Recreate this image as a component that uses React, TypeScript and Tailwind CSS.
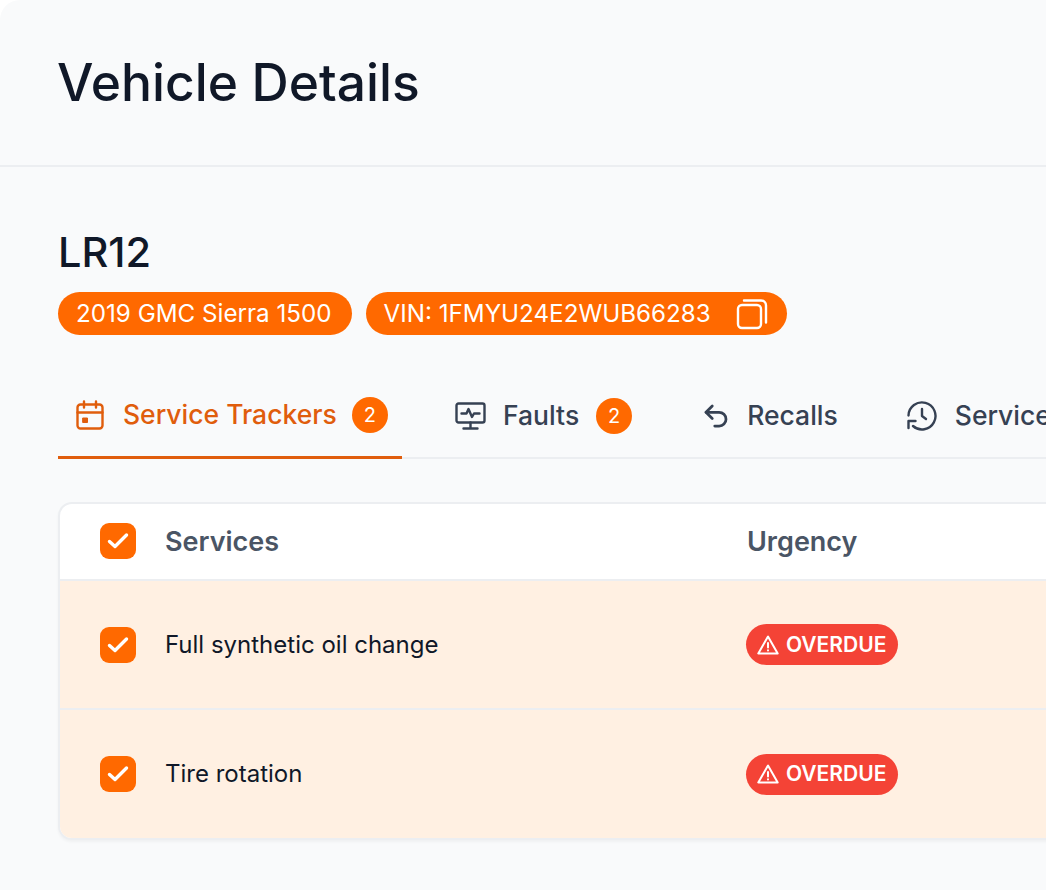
import { Undo2 } from 'lucide-react';

const CalendarIcon = () => (
  <svg width="30" height="30" viewBox="0 0 30 30" fill="none" stroke="currentColor" strokeWidth="2.4" strokeLinecap="round" strokeLinejoin="round">
    <rect x="1.5" y="4.5" width="25" height="24" rx="3" />
    <path d="M8 1.5v6M20 1.5v6M1.5 12.5h25" />
    <rect x="7" y="18" width="4.5" height="4.5" fill="currentColor" strokeWidth="1" />
  </svg>
);

const MonitorIcon = () => (
  <svg width="31" height="30" viewBox="0 0 31 30" fill="none" stroke="currentColor" strokeWidth="2.4" strokeLinecap="round" strokeLinejoin="round">
    <rect x="1.5" y="2.5" width="28" height="19" rx="2" />
    <path d="M15.5 21.5v6M8.5 27.5h14M6.5 12.5h5l2-4.5 3.5 8 2-3.5h5.5" />
  </svg>
);

const HistoryIcon = () => (
  <svg width="32" height="32" viewBox="0 0 32 32" fill="none" stroke="currentColor" strokeWidth="2.4" strokeLinecap="round" strokeLinejoin="round">
    <path d="M2.5 15.5a13.5 13.5 0 1 1 4.5 10.5" />
    <path d="M2.5 28v-7h7" />
    <path d="M16 9v7l4 3" />
  </svg>
);

const CopyIcon = () => (
  <svg width="32" height="32" viewBox="0 0 32 32" fill="none" stroke="currentColor" strokeWidth="2.4" strokeLinecap="round" strokeLinejoin="round">
    <rect x="2" y="7" width="23" height="23" rx="4" />
    <path d="M8 2.5h17a5 5 0 0 1 5 5v17" />
  </svg>
);

const WarningIcon = () => (
  <svg width="22" height="20" viewBox="0 0 22 20" fill="none" stroke="currentColor" strokeWidth="2" strokeLinecap="round" strokeLinejoin="round">
    <path d="M11 1.5 1.3 18.5h19.4z" />
    <path d="M11 8v4.5M11 15.3v.2" />
  </svg>
);

const Checkbox = () => (
  <span className="flex h-9 w-9 shrink-0 items-center justify-center rounded-[9px] bg-[#ff6900]">
    <svg width="22" height="18" viewBox="0 0 22 18" fill="none" stroke="white" strokeWidth="3.4" strokeLinecap="round" strokeLinejoin="round">
      <path d="M2.5 9.5 8 14.5 19.5 3" />
    </svg>
  </span>
);

const Count = ({ n }: { n: number }) => (
  <span className="flex h-9 w-9 items-center justify-center rounded-full bg-[#ff6900] text-[20px] font-normal text-white">{n}</span>
);

const Overdue = () => (
  <span className="-ml-px inline-flex h-[41px] w-[152px] items-center gap-[7px] rounded-full bg-[#f44336] pl-[11px] text-[21px] font-semibold text-white">
    <WarningIcon />
    OVERDUE
  </span>
);

export default function App() {
  return (
    <div className="h-[890px] w-[1046px] overflow-hidden bg-white font-['Inter','Noto_Sans',sans-serif]">
      <div className="h-full w-full rounded-tl-[20px] bg-[#f9fafb]">
        <div className="flex h-[167px] items-center border-b-2 border-[#eceef1] pl-[57px]">
          <h1 className="text-[51.5px] font-medium leading-none text-[#101828]">Vehicle Details</h1>
        </div>

        <div className="pl-[58px] pt-[62px]">
          <h2 className="text-[41.5px] font-medium leading-[46px] text-[#101828]">LR12</h2>

          <div className="mt-[17px] flex gap-[14px] text-[24.2px] text-white">
            <span className="flex h-[43px] items-center rounded-full bg-[#ff6900] pl-[18px] pr-[20px] pt-px">2019 GMC Sierra 1500</span>
            <span className="flex h-[43px] items-center gap-[25px] rounded-full bg-[#ff6900] pl-[18px] pr-[19px] pt-px">
              VIN: 1FMYU24E2WUB66283
              <CopyIcon />
            </span>
          </div>

          <div className="mt-[37px] flex h-[87px] w-[1100px] border-b-2 border-[#eceef1] pt-[2px] text-[26.5px] font-medium text-[#364153]">
            <div className="-mb-[2px] flex w-[344px] items-center border-b-[3px] border-[#e05d0c] pl-[18px] text-[#e05d0c]">
              <CalendarIcon />
              <span className="ml-[17px]">Service Trackers</span>
              <span className="ml-[15px]"><Count n={2} /></span>
            </div>
            <div className="ml-[53px] flex items-center gap-[17px]">
              <MonitorIcon />
              Faults
              <Count n={2} />
            </div>
            <div className="ml-[69px] flex items-center gap-[16px]">
              <Undo2 size={30} strokeWidth={2.2} />
              Recalls
            </div>
            <div className="ml-[68px] flex items-center gap-[17px]">
              <HistoryIcon />
              Service History
            </div>
          </div>

          <div className="mt-[43px] w-[1300px] overflow-hidden rounded-[14px] border-2 border-[#eceef1] bg-white shadow-[0_2px_3px_rgba(0,0,0,0.04)]">
            <div className="flex h-[77px] items-center border-b-2 border-[#eceef1] pb-px pl-[40px] text-[27px] font-semibold text-[#4a5565]">
              <Checkbox />
              <span className="ml-[29px] w-[582px] pt-[2px]">Services</span>
              <span className="pt-[2px]">Urgency</span>
            </div>
            <div className="flex h-[129px] items-center border-b-2 border-[#eceef1] bg-[#fff0e2] pl-[40px] text-[24px] text-[#101828]">
              <Checkbox />
              <span className="ml-[29px] w-[582px]">Full synthetic oil change</span>
              <Overdue />
            </div>
            <div className="flex h-[128px] items-center bg-[#fff0e2] pl-[40px] text-[24px] text-[#101828]">
              <Checkbox />
              <span className="ml-[29px] w-[582px]">Tire rotation</span>
              <Overdue />
            </div>
          </div>
        </div>
      </div>
    </div>
  );
}
